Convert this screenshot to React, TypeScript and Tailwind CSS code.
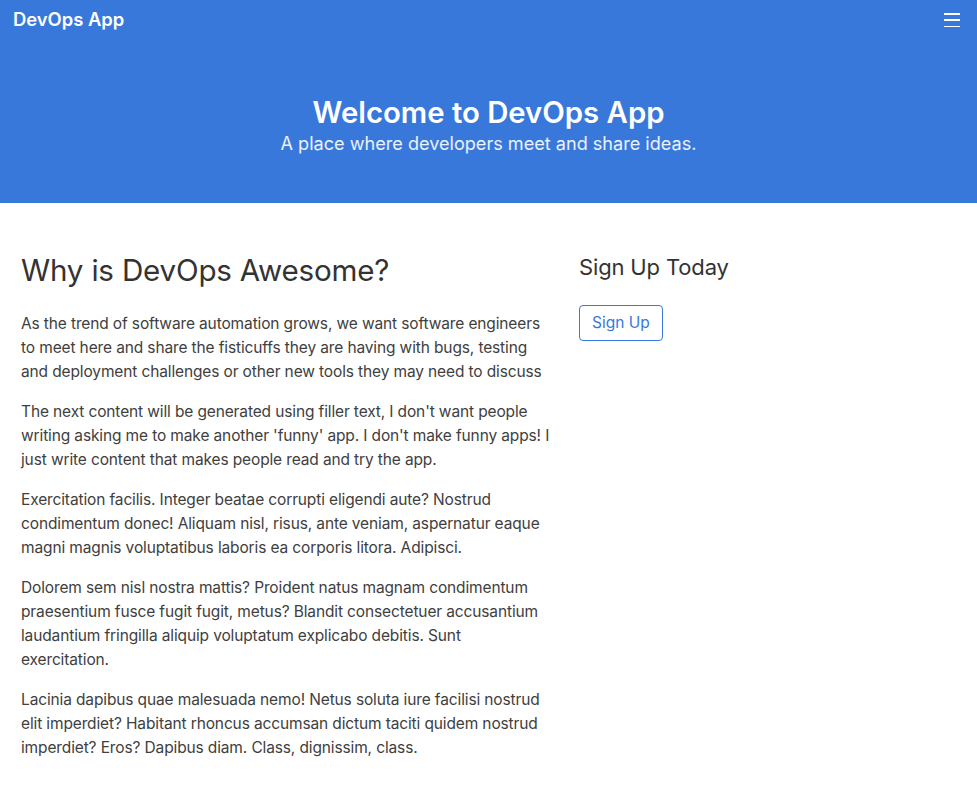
export default function App() {
  const paragraphs = [
    "As the trend of software automation grows, we want software engineers to meet here and share the fisticuffs they are having with bugs, testing and deployment challenges or other new tools they may need to discuss",
    "The next content will be generated using filler text, I don't want people writing asking me to make another 'funny' app. I don't make funny apps! I just write content that makes people read and try the app.",
    "Exercitation facilis. Integer beatae corrupti eligendi aute? Nostrud condimentum donec! Aliquam nisl, risus, ante veniam, aspernatur eaque magni magnis voluptatibus laboris ea corporis litora. Adipisci.",
    "Dolorem sem nisl nostra mattis? Proident natus magnam condimentum praesentium fusce fugit fugit, metus? Blandit consectetuer accusantium laudantium fringilla aliquip voluptatum explicabo debitis. Sunt exercitation.",
    "Lacinia dapibus quae malesuada nemo! Netus soluta iure facilisi nostrud elit imperdiet? Habitant rhoncus accumsan dictum taciti quidem nostrud imperdiet? Eros? Dapibus diam. Class, dignissim, class.",
  ];

  return (
    <div className="min-h-[790px] bg-white font-['Inter',sans-serif] text-[#404040]">
      <header className="h-[203px] bg-[#3878db] text-white">
        <nav className="flex h-10 items-center justify-between pl-[13px] pr-[17px]">
          <span className="text-[18.4px] font-semibold">DevOps App</span>
          <button className="flex h-4 w-4 flex-col justify-between py-[1px]" aria-label="Menu">
            <span className="block h-[1.5px] w-4 bg-white" />
            <span className="block h-[1.5px] w-4 bg-white" />
            <span className="block h-[1.5px] w-4 bg-white" />
          </button>
        </nav>
        <div className="flex flex-col items-center pt-[55px]">
          <h1 className="text-[29.3px] font-semibold leading-[36px]">Welcome to DevOps App</h1>
          <p className="text-[18.1px] leading-[24px] text-white/90">A place where developers meet and share ideas.</p>
        </div>
      </header>

      <main className="flex">
        <section className="w-[579px] pl-[21px] pr-[28px] pt-[47px]">
          <h2 className="mb-[22px] text-[29.6px] font-normal leading-[40px] tracking-[-0.2px] text-[#333]">Why is DevOps Awesome?</h2>
          {paragraphs.map((p, i) => (
            <p key={i} className="mb-4 text-[15.5px] leading-6 tracking-[-0.13px]">
              {p}
            </p>
          ))}
        </section>
        <aside className="flex-1 pt-[49px]">
          <h3 className="mb-[23px] text-[22px] font-normal leading-[30px] tracking-[-0.15px] text-[#333]">Sign Up Today</h3>
          <button className="h-9 rounded border border-[#3878db] px-3 text-[15.5px] text-[#3878db]">Sign Up</button>
        </aside>
      </main>
    </div>
  );
}
